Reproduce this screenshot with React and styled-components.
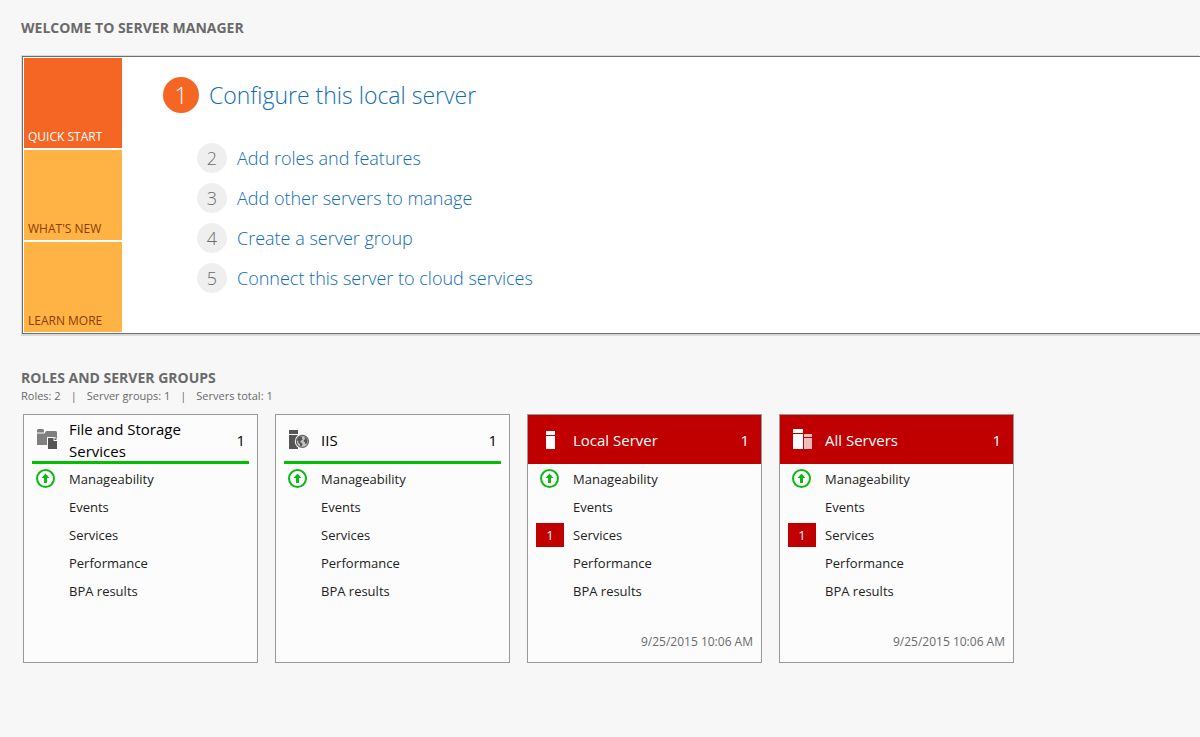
import React from 'react'
import styled, { createGlobalStyle } from 'styled-components';

const GlobalStyle = createGlobalStyle`
    body {
        margin: 0;
        background: #f7f7f7;
        font-family: "Open Sans", "Noto Sans", sans-serif;
        color: #222;
    }
    *, *::before, *::after {
        box-sizing: border-box;
    }
`

const Page = styled.main`
    padding: 18px 0 24px 21px;
`

const Title = styled.h1`
    margin: 0;
    font-size: 14px;
    line-height: 20px;
    font-weight: 700;
    color: #6a6a6a;
`

const WelcomePanel = styled.section`
    display: flex;
    margin: 18px 0 0 1px;
    padding: 1px;
    background: #fff;
    border: 1px solid #6e6e6e;
    border-right: none;
    box-shadow: -1px -1px 0 #dadada, 0 2px 0 #dadada, -1px 2px 0 #dadada;
`

const TileNav = styled.nav`
    display: flex;
    flex-direction: column;
    gap: 2px;
`

const Tile = styled.button`
    display: flex;
    align-items: flex-end;
    width: 98px;
    height: 90px;
    padding: 0 4px 2px;
    border: none;
    background: ${props => props.$active ? '#f56624' : '#ffb344'};
    color: ${props => props.$active ? '#fff' : '#8a3c0a'};
    font-family: inherit;
    font-size: 12px;
    line-height: 18px;
    cursor: pointer;
`

const Steps = styled.ol`
    list-style: none;
    margin: 0;
    padding: 19px 0 0 41px;
`

const Step = styled.li`
    display: flex;
    align-items: center;
    gap: 10px;
    margin-bottom: ${props => props.$main ? '30px' : '10px'};
    padding-left: ${props => props.$main ? '0' : '34px'};
    font-size: ${props => props.$main ? '23px' : '18px'};
    font-weight: 300;
`

const StepNumber = styled.span`
    display: flex;
    align-items: center;
    justify-content: center;
    width: ${props => props.$main ? '36px' : '30px'};
    height: ${props => props.$main ? '36px' : '30px'};
    border-radius: 50%;
    background: ${props => props.$main ? '#f56624' : '#efefef'};
    color: ${props => props.$main ? '#fff' : '#6a6a6a'};
`

const StepLink = styled.a`
    color: #0f6cb6;
    text-decoration: none;
`

const GroupsHeader = styled.header`
    margin: 34px 0 10px;
`

const Summary = styled.p`
    display: flex;
    gap: 10px;
    margin: 0;
    font-size: 11px;
    line-height: 16px;
    color: #6a6a6a;
`

const Cards = styled.div`
    display: flex;
    flex-wrap: wrap;
    gap: 17px;
    padding-left: 2px;
`

const Card = styled.article`
    display: flex;
    flex-direction: column;
    width: 235px;
    height: 249px;
    border: 1px solid #999;
    background: #fcfcfc;
`

const CardHeader = styled.header`
    display: flex;
    align-items: center;
    gap: 9px;
    height: 49px;
    margin: ${props => props.$alert ? '0' : '0 8px'};
    padding: ${props => props.$alert ? '0 12px 0 8px' : '3px 4px 0 0'};
    background: ${props => props.$alert ? '#c00000' : 'transparent'};
    border-bottom: ${props => props.$alert ? 'none' : '3px solid #00c000'};
    color: ${props => props.$alert ? '#fff' : '#000'};
    font-size: 15px;
    line-height: 22px;
`

const CardTitle = styled.h2`
    flex: 1;
    margin: 0;
    font-size: 15px;
    font-weight: 400;
`

const IconCell = styled.span`
    display: flex;
    align-items: center;
    justify-content: center;
    flex: none;
    width: 28px;
`

const Rows = styled.ul`
    list-style: none;
    margin: 0;
    padding: 1px 8px 0;
`

const Row = styled.li`
    display: flex;
    align-items: center;
    gap: 9px;
    height: 28px;
    font-size: 13px;
`

const Badge = styled.span`
    flex: 1;
    background: #c00000;
    color: #fff;
    line-height: 24px;
    text-align: center;
`

const Updated = styled.time`
    margin: auto 8px 12px auto;
    font-size: 12px;
    line-height: 16px;
    color: #6a6a6a;
`

function StorageIcon() {
    return (
        <svg width="22" height="21" viewBox="0 0 22 21">
            <path fill="#808080" d="M2 1 3 0h5l1 1v2.500H2zM2 4.500h7.500l1.500-2.500h10l1 1v13H2z" />
            <path fill="#fcfcfc" d="M12 8h8l2 2v11H12z" />
            <path fill="#555" d="M13 9h5.500v3H22v8h-9z" />
            <path fill="#555" d="M19.500 8.500 22 11h-2.500z" />
        </svg>
    )
}

function IisIcon() {
    return (
        <svg width="22" height="21" viewBox="0 0 22 21">
            <path fill="#555" d="M2 1h9v4H2zM2 6h9v14H2z" />
            <circle cx="15.400" cy="12.400" r="7.600" fill="#fcfcfc" />
            <circle cx="15.400" cy="12.400" r="6" fill="#c4c4c4" stroke="#666" strokeWidth="1.300" />
            <path fill="#555" d="M10.400 9.400 12.900 7.400l2.500.3-.6 1.700 1.100 1-2 1.300-.8 1.500 2 .9.400 1.300-1.200 2-1-.4-.4-2-1.800-1.600.300-1.300-1.200-.7zM17.100 8.100l2 .6 1.300 2.400-.5 3.500-1.600.4-.6-2-1.300-.8.800-1.400 1-.6z" />
        </svg>
    )
}

function LocalServerIcon() {
    return (
        <svg width="22" height="21" viewBox="0 0 22 21">
            <path fill="#fff" d="M7 2h9v4H7zM7 7h9v13H7z" />
        </svg>
    )
}

function AllServersIcon() {
    return (
        <svg width="22" height="21" viewBox="0 0 22 21">
            <path fill="#fff" d="M2 0h10v4H2zM2 5h10v15H2z" />
            <path fill="#f0bcbc" d="M13 5h8v3h-8zM13 9h8v11h-8z" />
        </svg>
    )
}

function UpIcon() {
    return (
        <svg width="20" height="20" viewBox="0 0 20 20">
            <circle cx="9.500" cy="9.500" r="8.500" fill="#fff" stroke="#0cb814" strokeWidth="2" />
            <path fill="#0cb814" d="M9.500 4.500l4 4.500H11v5H8V9H5.500z" />
        </svg>
    )
}

const tiles = ["QUICK START", "WHAT'S NEW", "LEARN MORE"]

const steps = [
    'Configure this local server',
    'Add roles and features',
    'Add other servers to manage',
    'Create a server group',
    'Connect this server to cloud services',
]

const groups = [
    { name: 'File and Storage Services', count: 1, Icon: StorageIcon },
    { name: 'IIS', count: 1, Icon: IisIcon },
    { name: 'Local Server', count: 1, Icon: LocalServerIcon, services: 1, updated: '9/25/2015 10:06 AM' },
    { name: 'All Servers', count: 1, Icon: AllServersIcon, services: 1, updated: '9/25/2015 10:06 AM' },
]

function GroupCard({ group }) {
    const { name, count, Icon, services, updated } = group
    const alert = Boolean(services)

    return (
        <Card>
            <CardHeader $alert={alert}>
                <IconCell><Icon /></IconCell>
                <CardTitle>{name}</CardTitle>
                <span>{count}</span>
            </CardHeader>
            <Rows>
                <Row><IconCell><UpIcon /></IconCell>Manageability</Row>
                <Row><IconCell />Events</Row>
                <Row><IconCell>{alert && <Badge>{services}</Badge>}</IconCell>Services</Row>
                <Row><IconCell />Performance</Row>
                <Row><IconCell />BPA results</Row>
            </Rows>
            {updated && <Updated>{updated}</Updated>}
        </Card>
    )
}

export default function App() {
    return (
        <Page>
            <GlobalStyle />
            <Title>WELCOME TO SERVER MANAGER</Title>
            <WelcomePanel>
                <TileNav>
                    {tiles.map((tile, i) => (
                        <Tile key={tile} type="button" $active={i === 0}>{tile}</Tile>
                    ))}
                </TileNav>
                <Steps>
                    {steps.map((step, i) => (
                        <Step key={step} $main={i === 0}>
                            <StepNumber $main={i === 0}>{i + 1}</StepNumber>
                            <StepLink href="#">{step}</StepLink>
                        </Step>
                    ))}
                </Steps>
            </WelcomePanel>

            <GroupsHeader>
                <Title>ROLES AND SERVER GROUPS</Title>
                <Summary>
                    <span>Roles: 2</span>
                    <span>|</span>
                    <span>Server groups: 1</span>
                    <span>|</span>
                    <span>Servers total: 1</span>
                </Summary>
            </GroupsHeader>
            <Cards>
                {groups.map(group => <GroupCard key={group.name} group={group} />)}
            </Cards>
        </Page>
    )
}
